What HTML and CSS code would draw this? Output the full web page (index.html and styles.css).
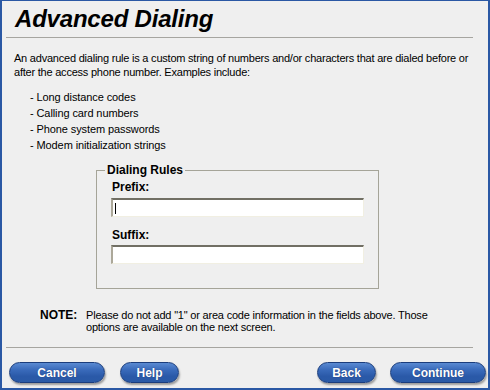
FILE: index.html
```html
<!DOCTYPE html>
<html>
<head>
<meta charset="utf-8">
<link rel="stylesheet" href="styles.css">
</head>
<body>
<div class="window">
  <h1 class="title">Advanced Dialing</h1>
  <div class="rule"></div>
  <p class="intro">An advanced dialing rule is a custom string of numbers and/or characters that are dialed before or after the access phone number. Examples include:</p>
  <ul class="examples">
    <li>- Long distance codes</li>
    <li>- Calling card numbers</li>
    <li>- Phone system passwords</li>
    <li>- Modem initialization strings</li>
  </ul>
  <fieldset class="rules">
    <legend class="legend">Dialing Rules</legend>
    <label class="field-label">Prefix:</label>
    <div class="input"><span class="caret"></span></div>
    <label class="field-label second">Suffix:</label>
    <div class="input"></div>
  </fieldset>
  <div class="note">
    <span class="note-label">NOTE:</span>
    <span class="note-text">Please do not add "1" or area code information in the fields above. Those options are available on the next screen.</span>
  </div>
  <div class="rule bottom"></div>
  <div class="buttons">
    <div class="group">
      <span class="btn wide">Cancel</span>
      <span class="btn narrow">Help</span>
    </div>
    <div class="group right">
      <span class="btn narrow">Back</span>
      <span class="btn wide">Continue</span>
    </div>
  </div>
</div>
</body>
</html>
```

FILE: styles.css
```css
html, body {
  margin: 0;
  padding: 0;
  background: #efefef;
}
.window {
  box-sizing: border-box;
  width: 490px;
  height: 390px;
  border-style: solid;
  border-color: #2a58a4;
  border-width: 1px 2px 2px 2px;
  background: #efefef;
  display: flex;
  flex-direction: column;
  font-family: "Liberation Sans", Arial, sans-serif;
  color: #000;
}
.title {
  margin: 4px 0 0 13px;
  font-size: 24px;
  line-height: 28px;
  font-weight: bold;
  font-style: italic;
  letter-spacing: -0.2px;
}
.rule {
  height: 1px;
  background: #a6a5a0;
  margin: 4px 0 0 4px;
  width: 467px;
}
.intro {
  margin: 13px 0 0 12px;
  font-size: 11px;
  line-height: 14px;
  width: 468px;
  letter-spacing: -0.22px;
}
.examples {
  list-style: none;
  margin: 10px 0 0 28px;
  padding: 0;
  font-size: 11px;
  line-height: 16px;
  letter-spacing: -0.1px;
}
.rules {
  margin: 11px 0 0 94px;
  width: 283px;
  box-sizing: border-box;
  height: 125px;
  border: 1px solid #a5a498;
  padding: 0 0 0 15px;
}
.legend {
  font-size: 12px;
  font-weight: bold;
  padding: 0 2px;
  margin-left: -7px;
  line-height: 12px;
}
.field-label {
  display: block;
  font-size: 12px;
  font-weight: bold;
  margin-top: 5px;
  line-height: 13px;
}
.field-label.second {
  margin-top: 12px;
}
.input {
  margin-top: 4px;
  margin-left: -1px;
  box-sizing: border-box;
  width: 253px;
  height: 19px;
  background: #fff;
  border-style: solid;
  border-width: 2px 1px 1px 2px;
  border-color: #716f64 #f1efe2 #f1efe2 #aca899;
  display: flex;
  align-items: center;
}
.input + .field-label.second + .input {
  margin-top: 3px;
}
.caret {
  display: block;
  width: 1px;
  height: 11px;
  background: #000;
  margin-left: 2px;
}
.note {
  display: flex;
  margin: 20px 0 0 38px;
  font-size: 11px;
  line-height: 12px;
}
.note-label {
  font-weight: bold;
  font-size: 12px;
  width: 46px;
  flex: none;
}
.note-text {
  width: 365px;
  letter-spacing: -0.2px;
}
.rule.bottom {
  margin-top: 14px;
}
.buttons {
  display: flex;
  justify-content: space-between;
  margin: 14px 2px 0 7px;
}
.group {
  display: flex;
  gap: 15px;
}
.btn {
  box-sizing: border-box;
  height: 21px;
  border-radius: 11px;
  border: 1px solid #1b3d7c;
  background: linear-gradient(#5a8ad2 0%, #3a6bbb 35%, #2a59a8 70%, #2a5aa6 100%);
  box-shadow: 1px 2px 2px rgba(0,0,0,0.35);
  color: #fff;
  font-weight: bold;
  font-size: 12px;
  display: flex;
  align-items: center;
  justify-content: center;
  text-shadow: 0 0 1px rgba(0,0,40,0.5);
}
.btn.wide { width: 96px; }
.btn.narrow { width: 59px; }
.group.right { gap: 14px; }
```
